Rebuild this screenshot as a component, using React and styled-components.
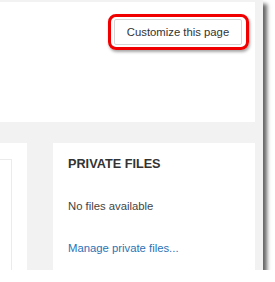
import React from "react";
import styled, { createGlobalStyle } from "styled-components";

const Global = createGlobalStyle`
  html, body { margin: 0; padding: 0; background: #ffffff; }
  body { font-family: "Liberation Sans", Arial, sans-serif; }
`;

const Frame = styled.div`
  width: 263px;
  height: 268px;
  background: #f2f2f2;
  padding-top: 2px;
  box-sizing: content-box;
  box-shadow: 4px 4px 4px rgba(0, 0, 0, 0.6);
  display: flex;
  flex-direction: column;
  overflow: hidden;
`;

const Header = styled.div`
  width: 255px;
  height: 120px;
  background: #ffffff;
  display: flex;
  justify-content: flex-end;
  align-items: flex-start;
`;

const Highlight = styled.div`
  margin: 12px 6px 0 0;
  padding: 2px 4px 2px 3px;
  border: 3px solid #f00000;
  border-radius: 8px;
  box-shadow: 1px 2px 3px rgba(0, 0, 0, 0.35);
  display: flex;
`;

const Button = styled.button`
  width: 128px;
  height: 26px;
  background: #ffffff;
  border: 1px solid #d6d6d6;
  border-radius: 2px;
  font-family: "Liberation Sans", Arial, sans-serif;
  font-size: 11.3px;
  color: #333333;
  padding: 0;
  display: flex;
  align-items: center;
  justify-content: center;
`;

const Row = styled.div`
  margin-top: 21px;
  flex: 1;
  display: flex;
  gap: 26px;
`;

const SidePanel = styled.div`
  width: 27px;
  background: #ffffff;
  padding: 16px 15px 0 0;
  box-sizing: border-box;
  display: flex;
`;

const SideBox = styled.div`
  flex: 1;
  border-top: 1px solid #ebebeb;
  border-right: 1px solid #ebebeb;
`;

const Block = styled.div`
  width: 202px;
  background: #ffffff;
  padding: 13px 15px 0 15px;
  box-sizing: border-box;
  display: flex;
  flex-direction: column;
`;

const Title = styled.h3`
  margin: 0;
  font-size: 12.7px;
  font-weight: bold;
  color: #333333;
  line-height: 16px;
`;

const Text = styled.p`
  margin: 26px 0 0 0;
  font-size: 11.3px;
  line-height: 16px;
  color: #444444;
`;

const Link = styled.a`
  margin-top: 26px;
  font-size: 11.3px;
  line-height: 16px;
  color: #2a73b5;
  text-decoration: none;
`;

export default function App() {
  return (
    <>
      <Global />
      <Frame>
        <Header>
          <Highlight>
            <Button>Customize this page</Button>
          </Highlight>
        </Header>
        <Row>
          <SidePanel>
            <SideBox />
          </SidePanel>
          <Block>
            <Title>PRIVATE FILES</Title>
            <Text>No files available</Text>
            <Link href="#">Manage private files...</Link>
          </Block>
        </Row>
      </Frame>
    </>
  );
}
